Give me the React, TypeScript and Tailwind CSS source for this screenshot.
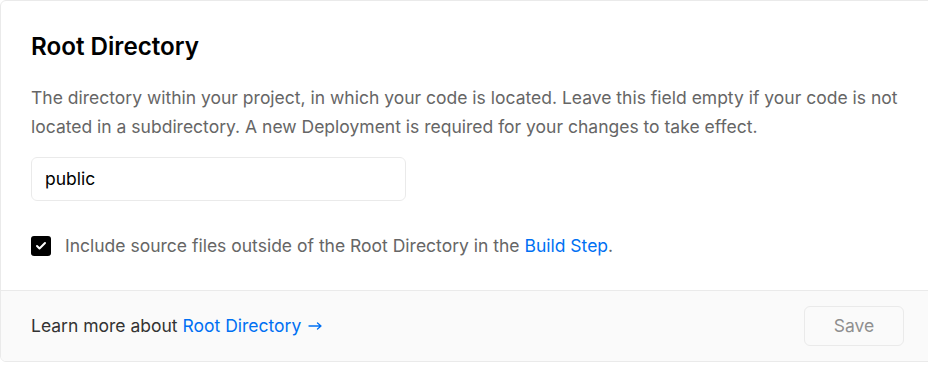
import { Check } from "lucide-react";

function Arrow() {
  return (
    <svg width="14" height="10" viewBox="0 0 14 10" fill="none" className="ml-[7px] inline-block align-[1px]">
      <path d="M1 5h12M9.5 2L13 5 9.5 8" stroke="currentColor" strokeWidth="1.3" strokeLinecap="round" strokeLinejoin="round" />
    </svg>
  );
}

export default function App() {
  return (
    <div className="h-[371px] w-[928px] overflow-hidden bg-white" style={{ fontFamily: "Inter, 'Noto Sans', sans-serif" }}>
      <div className="w-[936px] overflow-hidden rounded-md border border-[#eaeaea] bg-white">
        <div className="px-[30px] pt-[30px] pb-[32px]">
          <h2 className="text-[24.2px] leading-8 font-semibold text-black">Root Directory</h2>
          <p className="mt-[20px] text-[17.5px] leading-[29px] text-[#666]">
            The directory within your project, in which your code is located. Leave this field empty if your code is not located in a subdirectory. A new Deployment is required for your changes to take effect.
          </p>
          <div className="mt-[16px] flex h-[44px] w-[375px] items-center rounded-md border border-[#eaeaea] px-[13px] text-[17.5px] text-black">
            public
          </div>
          <label className="mt-[33px] flex items-center gap-[14px] text-[17.5px] leading-6 text-[#666]">
            <span className="flex h-5 w-5 items-center justify-center rounded-[3px] bg-black text-white">
              <Check className="h-3 w-3" strokeWidth={4} />
            </span>
            <span>
              Include source files outside of the Root Directory in the{" "}
              <a className="text-[#0070f3]">Build Step</a>.
            </span>
          </label>
        </div>
        <div className="flex items-center justify-between border-t border-[#eaeaea] bg-[#fafafa] py-[15px] pr-[31px] pl-[30px]">
          <p className="text-[17.5px] text-[#333]">
            Learn more about{" "}
            <a className="text-[#0070f3]">
              Root Directory
              <Arrow />
            </a>
          </p>
          <button className="h-10 w-[100px] rounded-md border border-[#eaeaea] bg-[#fafafa] text-[17.5px] text-[#8f8f8f]">
            Save
          </button>
        </div>
      </div>
    </div>
  );
}
